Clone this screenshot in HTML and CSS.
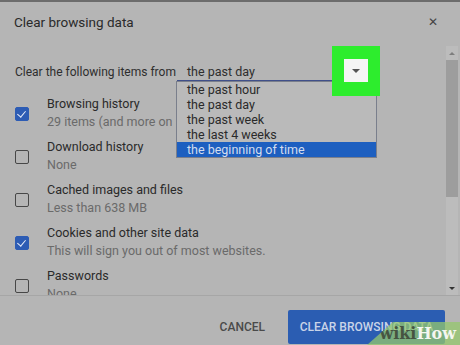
FILE: index.html
```html
<!DOCTYPE html>
<html lang="en">
<head>
    <meta charset="UTF-8">
    <title>Clear browsing data</title>
    <link rel="stylesheet" href="styles.css">
</head>
<body>
    <div class="top-edge"></div>

    <div class="head">
        <span class="title">Clear browsing data</span>
        <span class="close">&#x2715;</span>
    </div>

    <div class="scroll">
        <div class="content">
            <div class="range">
                <span class="range-label">Clear the following items from</span>
                <div class="select">
                    <span class="select-value">the past day</span>
                    <div class="highlight">
                        <div class="arrow-box"><span class="arrow"></span></div>
                    </div>
                    <ul class="options">
                        <li>the past hour</li>
                        <li>the past day</li>
                        <li>the past week</li>
                        <li>the last 4 weeks</li>
                        <li class="selected">the beginning of time</li>
                    </ul>
                </div>
            </div>

            <div class="item">
                <span class="box checked"></span>
                <div class="text">
                    <div class="label">Browsing history</div>
                    <div class="sub">29 items (and more on synced devices)</div>
                </div>
            </div>
            <div class="item">
                <span class="box"></span>
                <div class="text">
                    <div class="label">Download history</div>
                    <div class="sub">None</div>
                </div>
            </div>
            <div class="item">
                <span class="box"></span>
                <div class="text">
                    <div class="label">Cached images and files</div>
                    <div class="sub">Less than 638 MB</div>
                </div>
            </div>
            <div class="item">
                <span class="box checked"></span>
                <div class="text">
                    <div class="label">Cookies and other site data</div>
                    <div class="sub">This will sign you out of most websites.</div>
                </div>
            </div>
            <div class="item">
                <span class="box"></span>
                <div class="text">
                    <div class="label">Passwords</div>
                    <div class="sub">None</div>
                </div>
            </div>
        </div>

        <div class="scrollbar">
            <span class="sb-up"></span>
            <div class="sb-track"><div class="sb-thumb"></div></div>
            <span class="sb-down"></span>
        </div>
    </div>

    <div class="footer">
        <button class="btn-cancel">CANCEL</button>
        <button class="btn-clear">CLEAR BROWSING DATA</button>
    </div>

    <div class="watermark">
        <span class="wm-wiki">wiki</span><span class="wm-how">How</span>
    </div>
</body>
</html>
```

FILE: styles.css
```css
body {
    margin: 0;
    width: 460px;
    height: 345px;
    overflow: hidden;
    background-color: #b5b5b5;
    color: #2e2e2e;
    font-family: Roboto, "Liberation Sans", sans-serif;
    position: relative;
}
.top-edge {
    height: 2px;
    background: #6c6c6c;
}
.head {
    height: 40px;
    padding: 0 22px 4px 14px;
    display: flex;
    align-items: center;
    justify-content: space-between;
}
.title {
    font-size: 13.5px;
    color: #2a2a2a;
}
.close {
    font-size: 12px;
    color: #444;
}
.scroll {
    height: 249px;
    display: flex;
    overflow: hidden;
    border-bottom: 1px solid #a6a6a6;
}
.content {
    flex: 1;
    padding-left: 15px;
}
.range {
    margin-top: 18px;
    height: 16px;
    display: flex;
    align-items: center;
    font-size: 12px;
    margin-bottom: 15px;
}
.range-label {
    width: 162px;
    color: #2e2e2e;
}
.select {
    position: relative;
    width: 190px;
    height: 16px;
    padding-left: 10px;
    border-bottom: 1px solid #40508a;
    display: flex;
    align-items: center;
}
.select-value {
    font-size: 12.5px;
}
.highlight {
    position: absolute;
    left: 155px;
    top: -18px;
    width: 48px;
    height: 50px;
    background: #2ded2d;
    display: flex;
    align-items: center;
    justify-content: center;
    z-index: 3;
}
.arrow-box {
    width: 24px;
    height: 23px;
    background: #f5f5f5;
    display: flex;
    align-items: center;
    justify-content: center;
}
.arrow {
    width: 0;
    height: 0;
    border-left: 4px solid transparent;
    border-right: 4px solid transparent;
    border-top: 4px solid #555;
}
.options {
    position: absolute;
    left: -1px;
    top: 17px;
    width: 199px;
    margin: 0;
    padding: 0;
    list-style: none;
    background: #bababa;
    border: 1px solid #7a7f8c;
    font-size: 12.5px;
    z-index: 2;
}
.options li {
    height: 15px;
    line-height: 15px;
    padding-left: 10px;
    color: #2a2a2a;
}
.options .selected {
    background: #1d5fc0;
    color: #d3ddef;
}
.item {
    height: 43px;
    display: flex;
    align-items: flex-start;
}
.box {
    width: 12px;
    height: 12px;
    margin-top: 12px;
    border: 1.5px solid #474747;
    border-radius: 2px;
    flex-shrink: 0;
    position: relative;
}
.box.checked {
    background: #2d5cb4;
    border-color: #2d5cb4;
}
.box.checked::after {
    content: "";
    position: absolute;
    left: 3px;
    top: 1px;
    width: 4px;
    height: 7px;
    border-right: 1.5px solid #e8eefa;
    border-bottom: 1.5px solid #e8eefa;
    transform: rotate(40deg);
}
.text {
    margin-left: 18px;
    white-space: nowrap;
}
.label {
    height: 18px;
    line-height: 18px;
    font-size: 12.5px;
    color: #2a2a2a;
}
.sub {
    height: 18px;
    line-height: 18px;
    font-size: 12.5px;
    color: #6a6a6a;
}
.scrollbar {
    width: 12px;
    margin-right: 2px;
    background: #bcbcbc;
    display: flex;
    flex-direction: column;
    align-items: center;
}
.sb-up, .sb-down {
    height: 14px;
    display: flex;
    align-items: center;
}
.sb-up::before {
    content: "";
    border-left: 3px solid transparent;
    border-right: 3px solid transparent;
    border-bottom: 3px solid #7e7e7e;
}
.sb-down::before {
    content: "";
    border-left: 3px solid transparent;
    border-right: 3px solid transparent;
    border-top: 3px solid #333;
}
.sb-track {
    flex: 1;
    width: 100%;
}
.sb-thumb {
    height: 137px;
    background: #9d9d9d;
}
.footer {
    display: flex;
    justify-content: flex-end;
    align-items: flex-start;
    padding: 14px 15px 0 0;
    gap: 6px;
}
button {
    font-family: Roboto, "Liberation Sans", sans-serif;
    font-size: 12px;
    font-weight: 500;
    border: none;
    height: 34px;
    cursor: pointer;
}
.btn-cancel {
    background: transparent;
    color: #4a4a4a;
    padding: 0 17px;
}
.btn-clear {
    width: 157px;
    background: #2b5db2;
    color: #c9d4e8;
    border-radius: 2px;
}
.watermark {
    position: absolute;
    right: 0;
    bottom: 0;
    width: 93px;
    height: 23px;
    background: rgba(150, 200, 110, 0.75);
    clip-path: polygon(26px 0, 100% 0, 100% 100%, 0 100%);
    display: flex;
    align-items: center;
    justify-content: flex-end;
    padding-right: 4px;
    box-sizing: border-box;
    font-family: "DejaVu Serif", serif;
    font-weight: bold;
    font-size: 16px;
}
.wm-wiki {
    color: #465441;
}
.wm-how {
    color: #f4f6f0;
}
```
